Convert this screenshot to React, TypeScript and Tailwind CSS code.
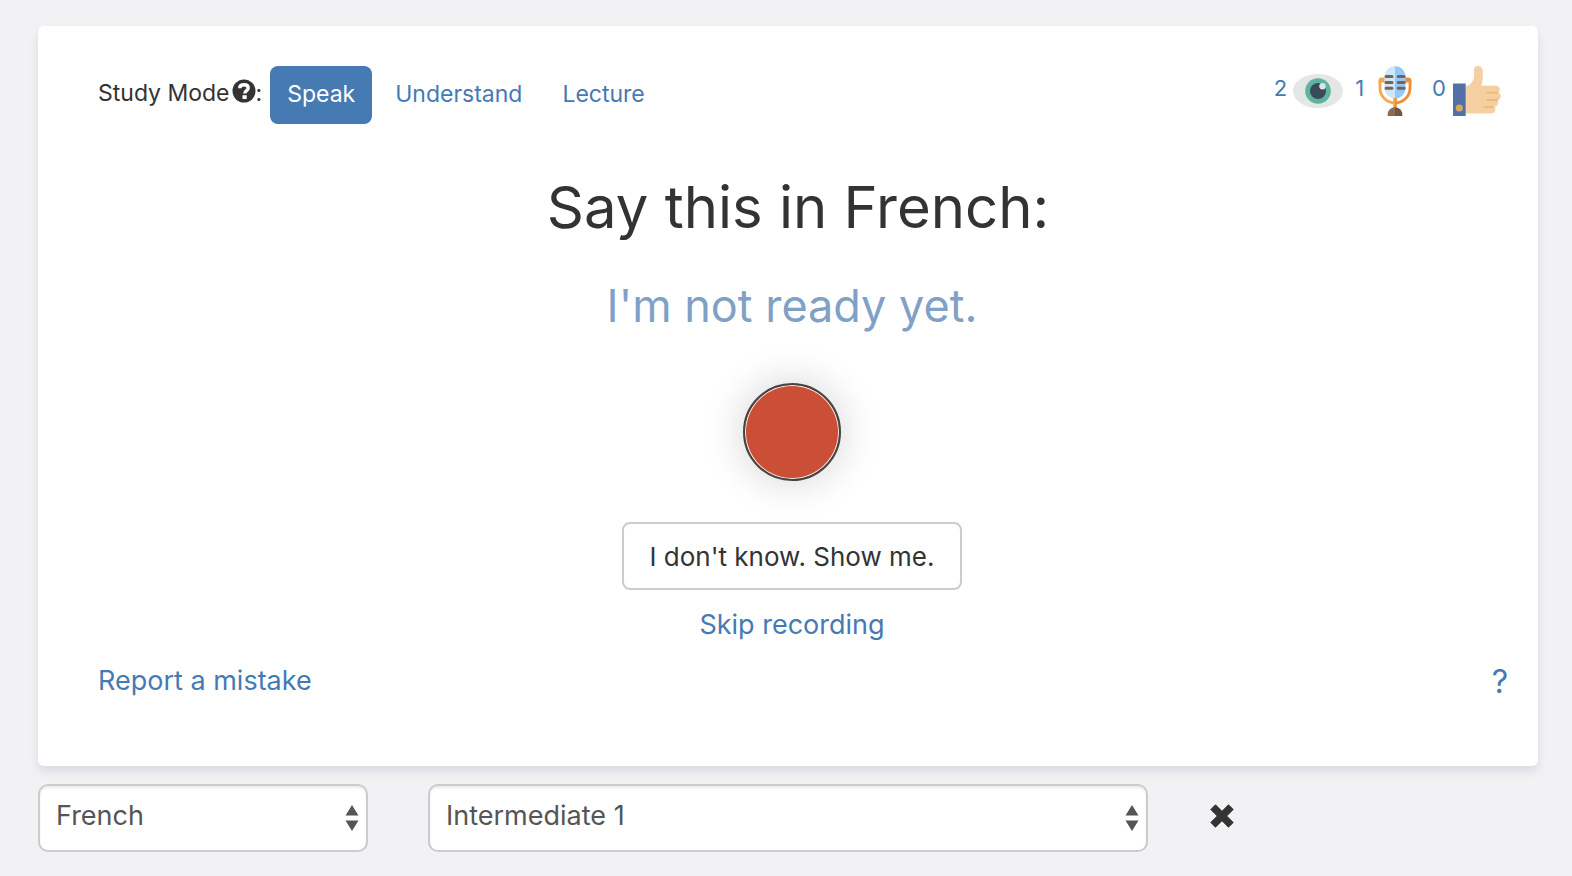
import { useState } from 'react'

const MODES = ['Speak', 'Understand', 'Lecture']

function EyeIcon() {
  return (
    <svg viewBox="0 0 50 50" className="h-[50px] w-[50px]" aria-hidden="true">
      <ellipse cx="25" cy="25" rx="25" ry="17" fill="#e3e7e5" />
      <circle cx="25" cy="25" r="12.8" fill="#5fb3a1" />
      <circle cx="25" cy="25" r="8" fill="#3a4a5b" />
      <circle cx="29.5" cy="20.3" r="3.2" fill="#dfe7e4" />
    </svg>
  )
}

function MicIcon() {
  return (
    <svg viewBox="0 0 50 50" className="h-[50px] w-[50px]" aria-hidden="true">
      <path d="M14.5 13H12q-2 0-2 2v7a15 15 0 0 0 15 15" fill="none" stroke="#f6a74c" strokeWidth="2.8" />
      <path d="M35.5 13H38q2 0 2 2v7a15 15 0 0 1-15 15" fill="none" stroke="#f08c32" strokeWidth="2.8" />
      <path d="M11 12h4v4.500h-4l-2.400 2v-4q0-2.500 2.400-2.500z" fill="#f6a74c" />
      <path d="M39 12h-4v4.500h4l2.400 2v-4q0-2.500-2.400-2.500z" fill="#f08c32" />
      <path d="M25 0v32.5A10.500 10.500 0 0 1 14.500 22V10.500A10.500 10.500 0 0 1 25 0z" fill="#cde7fd" />
      <path d="M25 0v32.5A10.500 10.500 0 0 0 35.500 22V10.500A10.500 10.500 0 0 0 25 0z" fill="#92c8fb" />
      <path d="M23.200 32H25v11h-1.800z" fill="#f6a74c" />
      <path d="M25 32h1.800v11H25z" fill="#f08c32" />
      <g stroke="#7d6350" strokeWidth="3" strokeLinecap="round">
        <path d="M16 10.500h6M16 16.400h6M16 22.200h6" />
        <path d="M28.200 10.500h6M28.200 16.400h6M28.200 22.200h6" />
      </g>
      <path d="M17.700 50v-1.500A7.300 7.300 0 0 1 25 41.200V50z" fill="#8a6c54" />
      <path d="M32.300 50v-1.500A7.300 7.300 0 0 0 25 41.200V50z" fill="#735841" />
    </svg>
  )
}

function ThumbIcon() {
  return (
    <svg viewBox="0 0 50 50" className="h-[50px] w-[50px]" aria-hidden="true">
      <path
        d="M13.500 20.500c5.500-1.500 8.500-5.500 8.500-11V4q0-4 4-4 4.300 0 4.800 5.500c.4 5-.3 9.500-1.300 14.200H43.500q4.300 0 4.300 3.600 0 2.200-1.300 3.200 2.500 1 2.300 4-.3 3-3 3.800.8 1 .3 3.200-.8 2.700-3.300 2.900.9 1 .6 3.100-.5 4-4.500 4H13.500z"
        fill="#f4cfa2"
      />
      <path d="M35 26.600h10M35 34h10M33 41.200h8" stroke="#f0b870" strokeWidth="1.800" strokeLinecap="round" />
      <path d="M1 17.500h12.700V50H1z" fill="#5270a8" />
      <circle cx="7.300" cy="42" r="3.600" fill="#d4a85c" />
    </svg>
  )
}

function HelpIcon() {
  return (
    <svg viewBox="0 0 24 24" className="h-6 w-6" aria-hidden="true">
      <circle cx="12" cy="12" r="11.5" fill="#333" />
      <path d="M7.700 9.200C7.700 6.600 9.500 5.800 12.200 5.800s4 1.200 4 3.200c0 2.800-3.400 2.600-3.400 5.600" fill="none" stroke="#fff" strokeWidth="3.4" />
      <path d="M10.500 16.200h4.200v3.800h-4.200z" fill="#fff" />
    </svg>
  )
}

function CloseIcon() {
  return (
    <svg viewBox="0 0 24 24" className="h-6 w-6" aria-hidden="true">
      <path
        d="M5.500.8 12 7.300 18.500.8 23.200 5.500 16.700 12l6.500 6.500-4.700 4.700-6.500-6.500-6.500 6.500L.8 18.500 7.300 12 .8 5.500z"
        fill="#333"
        stroke="#333"
        strokeLinejoin="round"
      />
    </svg>
  )
}

interface PickerProps {
  label: string
  options: string[]
}

function Picker({ label, options }: PickerProps) {
  return (
    <div className="relative">
      <select
        aria-label={label}
        className="h-[68px] w-full appearance-none rounded-[10px] border-2 border-[#ccc] bg-white px-4 pb-1 text-[27px] text-[#555] shadow-[inset_0_2px_2px_rgba(0,0,0,0.075)]"
      >
        {options.map((option) => (
          <option key={option}>{option}</option>
        ))}
      </select>
      <svg viewBox="0 0 14 26" className="pointer-events-none absolute top-[21px] right-[9px] h-[26px] w-[14px]" aria-hidden="true">
        <path d="M7 0l6.500 10.500H.5zM7 26 .5 15.500h13z" fill="#555" />
      </svg>
    </div>
  )
}

export default function App() {
  const [mode, setMode] = useState('Speak')

  return (
    <div className="min-h-screen bg-[#f2f2f4] pt-[26px] pr-[34px] pb-6 pl-[38px] font-['Inter',sans-serif] text-[#333]">
      <main className="rounded-md bg-white pb-[65px] shadow-[0_5px_10px_rgba(50,80,120,0.14)]">
        <header className="flex items-start justify-between pt-10 pr-9 pl-[60px]">
          <nav className="flex items-center text-[23px]">
            <span className="mr-2 flex items-center gap-0.5 pb-1">
              Study Mode
              <span className="flex items-center">
                <span className="pb-1">
                  <HelpIcon />
                </span>
                :
              </span>
            </span>
            {MODES.map((item) => (
              <button
                key={item}
                type="button"
                onClick={() => setMode(item)}
                className={`mr-1.5 h-[58px] rounded-lg px-[17px] pb-0.5 ${item === mode ? 'bg-[#467ab3] text-white' : 'text-[#467ab3]'}`}
              >
                {item}
              </button>
            ))}
          </nav>

          <div className="flex items-center text-[22px] text-[#467ab3]">
            <span className="mr-1.5 pb-1.5">2</span>
            <EyeIcon />
            <span className="mr-1.5 ml-3 pb-1.5">1</span>
            <MicIcon />
            <span className="mr-1.5 ml-3 pb-1.5">0</span>
            <ThumbIcon />
          </div>
        </header>

        <section className="flex flex-col items-center pl-2">
          <h1 className="mt-[49px] pl-3 text-[58px] leading-[68px]">Say this in French:</h1>
          <p className="mt-[37px] text-[45px] leading-[56px] text-[#80a1c6]">I'm not ready yet.</p>
          <button
            type="button"
            aria-label="Record"
            className="mt-[49px] h-[98px] w-[98px] rounded-full border-2 border-[#444] bg-[#cb4f37] shadow-[inset_0_0_0_1px_#f3ebe8,0_0_40px_rgba(0,0,0,0.18)]"
          />
          <button type="button" className="mt-[41px] h-[68px] rounded-lg border-2 border-[#ccc] px-[26px] text-[26px]">
            I don't know. Show me.
          </button>
          <a href="#skip" className="mt-[17px] text-[27px] leading-9 text-[#467ab3]">
            Skip recording
          </a>
        </section>

        <footer className="mt-5 flex items-center justify-between pr-[30px] pl-[60px] text-[#467ab3]">
          <a href="#report" className="pb-0.5 text-[27px] leading-9">
            Report a mistake
          </a>
          <a href="#help" className="text-[32px] leading-9">
            ?
          </a>
        </footer>
      </main>

      <div className="mt-[18px] grid grid-cols-12 items-center gap-x-[60px]">
        <div className="col-span-3">
          <Picker label="Language" options={['French', 'German', 'Spanish']} />
        </div>
        <div className="col-span-6">
          <Picker label="Level" options={['Intermediate 1', 'Intermediate 2']} />
        </div>
        <button type="button" aria-label="Close" className="col-span-1 pb-1 pl-0.5">
          <CloseIcon />
        </button>
      </div>
    </div>
  )
}
